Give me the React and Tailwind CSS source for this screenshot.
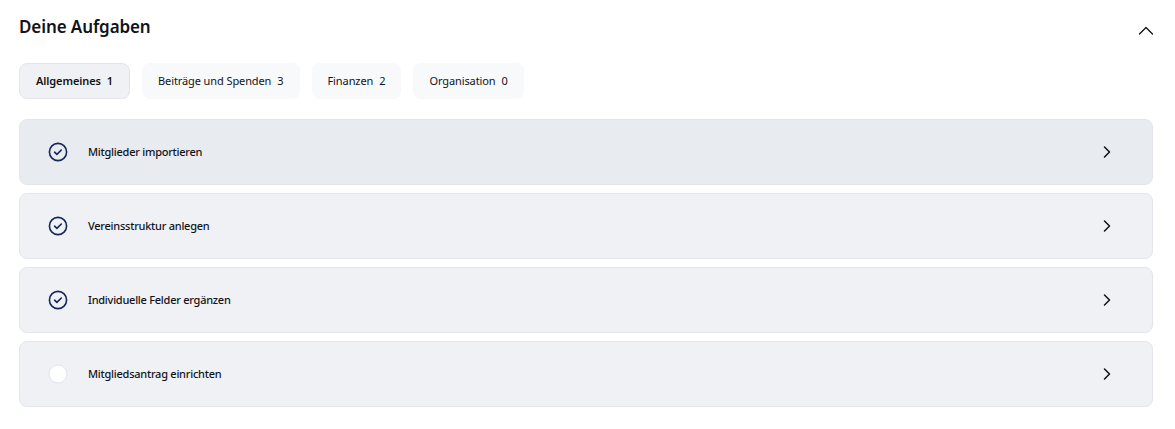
import React from "react";

const tabs = [
  { label: "Allgemeines", count: 1, active: true },
  { label: "Beiträge und Spenden", count: 3 },
  { label: "Finanzen", count: 2 },
  { label: "Organisation", count: 0 },
];

const tasks = [
  { label: "Mitglieder importieren", done: true, hover: true },
  { label: "Vereinsstruktur anlegen", done: true },
  { label: "Individuelle Felder ergänzen", done: true },
  { label: "Mitgliedsantrag einrichten", done: false },
];

function CheckCircle() {
  return (
    <svg width="20" height="20" viewBox="0 0 20 20" fill="none">
      <circle cx="10" cy="10" r="8.6" stroke="#14265a" strokeWidth="1.6" />
      <path d="M6.6 10.2l2.3 2.2 4.4-4.4" stroke="#14265a" strokeWidth="1.6" strokeLinecap="round" strokeLinejoin="round" />
    </svg>
  );
}

function EmptyCircle() {
  return (
    <svg width="20" height="20" viewBox="0 0 20 20" fill="none">
      <circle cx="10" cy="10" r="9" fill="#ffffff" stroke="#dfe2ea" strokeWidth="1" />
    </svg>
  );
}

export default function App() {
  return (
    <div className="w-[1175px] h-[429px] bg-white px-[19px] pt-[14px]" style={{ fontFamily: '"Noto Sans", "Open Sans", sans-serif' }}>
      <div className="flex items-center justify-between h-[26px]">
        <h2 className="text-[17px] font-semibold text-[#111318] tracking-[-0.1px]">Deine Aufgaben</h2>
        <svg width="16" height="14" viewBox="0 0 16 14" fill="none" className="mr-[2px] mt-[8px]">
          <path d="M1.5 10L8 3.5 14.5 10" stroke="#111" strokeWidth="1.3" strokeLinecap="round" strokeLinejoin="round" />
        </svg>
      </div>
      <div className="flex gap-[12px] mt-[23px]">
        {tabs.map((t) => (
          <div
            key={t.label}
            className={
              "h-[36px] flex items-center px-[16px] rounded-[8px] text-[11px] tracking-[-0.1px] text-[#111318] " +
              (t.active ? "bg-[#f0f1f5] border border-[#e3e5ea] font-semibold" : "bg-[#f8f9fb]")
            }
          >
            <span>{t.label}</span>
            <span className="ml-[6px]">{t.count}</span>
          </div>
        ))}
      </div>
      <div className="flex flex-col gap-[8px] mt-[20px] w-[1134px]">
        {tasks.map((t) => (
          <div
            key={t.label}
            className={
              "h-[66px] flex items-center rounded-[8px] border border-[#e3e5ea] pl-[28px] pr-[38px] " +
              (t.hover ? "bg-[#e8ebf0]" : "bg-[#f0f1f5]")
            }
          >
            {t.done ? <CheckCircle /> : <EmptyCircle />}
            <span className="ml-[20px] text-[11px] tracking-[-0.25px] font-medium text-[#111318] flex-1">{t.label}</span>
            <svg width="14" height="14" viewBox="0 0 14 14" fill="none">
              <path d="M4.5 2l5 5-5 5" stroke="#111" strokeWidth="1.5" strokeLinecap="round" strokeLinejoin="round" />
            </svg>
          </div>
        ))}
      </div>
    </div>
  );
}
